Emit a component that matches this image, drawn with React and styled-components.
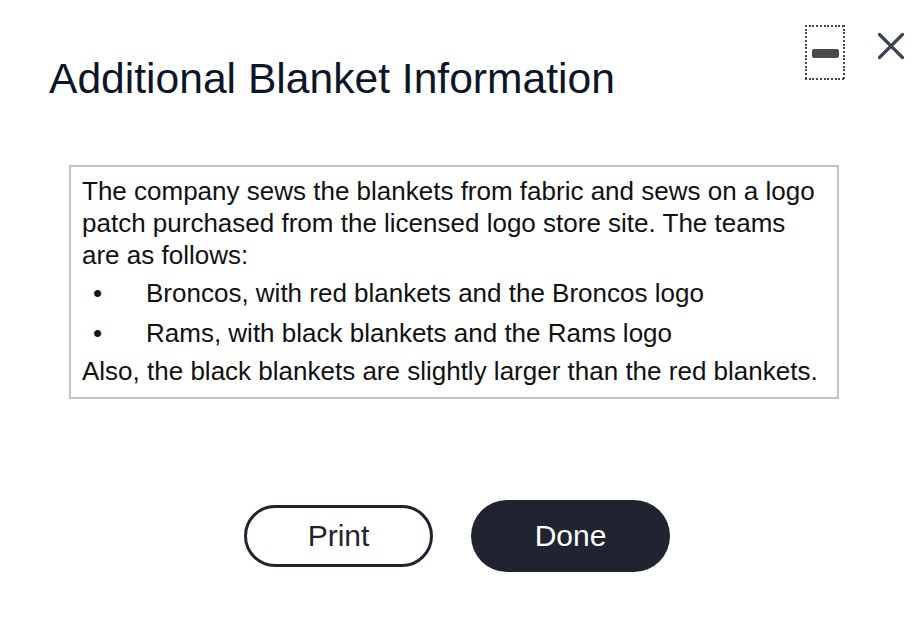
import React from "react";
import styled, { createGlobalStyle } from "styled-components";

const Global = createGlobalStyle`
  html, body { margin: 0; padding: 0; background: #ffffff; }
  body { font-family: "Liberation Sans", Arial, Helvetica, sans-serif; }
  * { box-sizing: border-box; }
`;

const Page = styled.div`
  width: 924px;
  height: 634px;
  display: flex;
  flex-direction: column;
  background: #fff;
`;

const Header = styled.div`
  display: flex;
  justify-content: space-between;
  align-items: flex-start;
  padding: 25px 19px 0 49px;
`;

const Title = styled.h1`
  margin: 29px 0 0 0;
  font-size: 42.6px;
  line-height: 48px;
  font-weight: 400;
  color: #0d1628;
`;

const Controls = styled.div`
  display: flex;
  align-items: flex-start;
  gap: 32px;
`;

const dotH = "repeating-linear-gradient(90deg, #474747 0 2px, transparent 2px 3.7px)";
const dotV = "repeating-linear-gradient(180deg, #474747 0 2px, transparent 2px 3.7px)";

const MinButton = styled.button`
  width: 40px;
  height: 55px;
  border: none;
  background:
    ${dotH} left top / 100% 2px no-repeat,
    ${dotH} left bottom / 100% 2px no-repeat,
    ${dotV} left top / 2px 100% no-repeat,
    ${dotV} right top / 2px 100% no-repeat;
  padding: 0;
  display: flex;
  align-items: center;
  justify-content: center;
`;

const MinBar = styled.span`
  display: block;
  width: 27px;
  height: 9px;
  border-radius: 2px;
  background: #4b4b4d;
  margin-top: 1px;
`;

const CloseButton = styled.button`
  width: 28px;
  height: 28px;
  margin-top: 7px;
  border: none;
  background: transparent;
  padding: 0;
  display: flex;
`;

const InfoBox = styled.div`
  margin: 63px 0 0 69px;
  width: 770px;
  border: 2px solid #c4c4c4;
  padding: 8px 11px 10px 11px;
  font-size: 26px;
  line-height: 32px;
  color: #111111;
`;

const Para = styled.p`
  margin: 0;
`;

const List = styled.ul`
  list-style: none;
  margin: 0;
  padding: 6px 0;
  display: flex;
  flex-direction: column;
  gap: 8px;
`;

const Item = styled.li`
  display: flex;
`;

const Bullet = styled.span`
  width: 64px;
  flex: none;
  padding-left: 11px;
`;

const ButtonRow = styled.div`
  display: flex;
  align-items: center;
  justify-content: center;
  gap: 38px;
  margin-top: 101px;
  padding-right: 10px;
`;

const PillButton = styled.button`
  font-family: "Liberation Sans", Arial, Helvetica, sans-serif;
  font-size: 30px;
  border-radius: 999px;
  width: ${(p) => (p.$primary ? "199px" : "189px")};
  height: ${(p) => (p.$primary ? "72px" : "62px")};
  border: ${(p) => (p.$primary ? "none" : "3px solid #1f2430")};
  background: ${(p) => (p.$primary ? "#1f2430" : "#ffffff")};
  color: ${(p) => (p.$primary ? "#ffffff" : "#1f2430")};
  padding: 0;
`;

export default function App() {
  return (
    <Page>
      <Global />
      <Header>
        <Title>Additional Blanket Information</Title>
        <Controls>
          <MinButton aria-label="Minimize">
            <MinBar />
          </MinButton>
          <CloseButton aria-label="Close">
            <svg width="28" height="28" viewBox="0 0 28 28">
              <path d="M2.5 2.5 L25.5 25.5 M25.5 2.5 L2.5 25.5" stroke="#3d4350" strokeWidth="3.2" strokeLinecap="round" fill="none" />
            </svg>
          </CloseButton>
        </Controls>
      </Header>
      <InfoBox>
        <Para>
          The company sews the blankets from fabric and sews on a logo patch purchased from the licensed logo store site. The teams are as follows:
        </Para>
        <List>
          <Item><Bullet>•</Bullet>Broncos, with red blankets and the Broncos logo</Item>
          <Item><Bullet>•</Bullet>Rams, with black blankets and the Rams logo</Item>
        </List>
        <Para>Also, the black blankets are slightly larger than the red blankets.</Para>
      </InfoBox>
      <ButtonRow>
        <PillButton>Print</PillButton>
        <PillButton $primary>Done</PillButton>
      </ButtonRow>
    </Page>
  );
}
